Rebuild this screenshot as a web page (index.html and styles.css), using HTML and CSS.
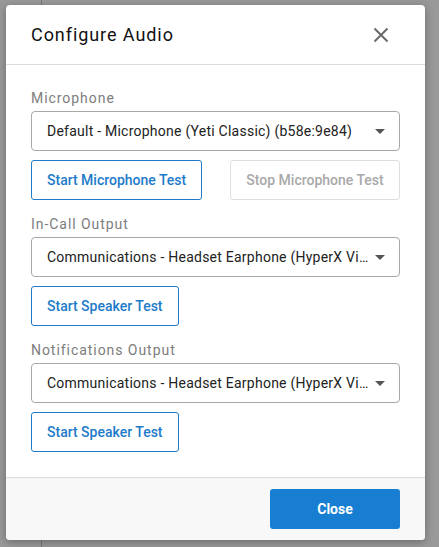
FILE: index.html
```html
<!DOCTYPE html>
<html>
<head>
<meta charset="utf-8">
<link rel="stylesheet" href="styles.css">
</head>
<body>
<div class="page">
  <div class="page-line"></div>
</div>
<div class="backdrop">
  <div class="dialog">
    <div class="dialog-header">
      <h1 class="dialog-title">Configure Audio</h1>
      <button class="icon-btn" aria-label="Close">
        <svg width="16" height="16" viewBox="0 0 16 16"><path d="M1.5 1.5 L14.5 14.5 M14.5 1.5 L1.5 14.5" stroke="#6b6b6b" stroke-width="2" fill="none"/></svg>
      </button>
    </div>
    <div class="dialog-body">
      <div class="section">
        <div class="field-label">Microphone</div>
        <div class="select"><span class="select-text">Default - Microphone (Yeti Classic) (b58e:9e84)</span><span class="caret"></span></div>
        <div class="btn-row">
          <button class="btn btn-outline">Start Microphone Test</button>
          <button class="btn btn-disabled">Stop Microphone Test</button>
        </div>
      </div>
      <div class="section">
        <div class="field-label">In-Call Output</div>
        <div class="select"><span class="select-text">Communications - Headset Earphone (HyperX Virtual Surround Sound)</span><span class="caret"></span></div>
        <div class="btn-row">
          <button class="btn btn-outline">Start Speaker Test</button>
        </div>
      </div>
      <div class="section">
        <div class="field-label">Notifications Output</div>
        <div class="select"><span class="select-text">Communications - Headset Earphone (HyperX Virtual Surround Sound)</span><span class="caret"></span></div>
        <div class="btn-row">
          <button class="btn btn-outline">Start Speaker Test</button>
        </div>
      </div>
    </div>
    <div class="dialog-footer">
      <button class="btn btn-primary">Close</button>
    </div>
  </div>
</div>
</body>
</html>
```
FILE: styles.css
```css
* { box-sizing: border-box; }
html, body { margin: 0; padding: 0; }
body {
  width: 439px;
  height: 547px;
  overflow: hidden;
  font-family: Roboto, "Liberation Sans", sans-serif;
  background: #fff;
  position: relative;
}
.page { position: absolute; inset: 0; background: #fff; }
.page-line { position: absolute; left: 41px; top: 0; bottom: 0; width: 1px; background: #c8c8c8; }
.backdrop {
  position: absolute;
  inset: 0;
  background: rgba(0,0,0,0.4);
  padding: 5px 14px 0 6px;
}
.dialog {
  width: 419px;
  height: 535px;
  background: #fff;
  border-radius: 4px;
  box-shadow: 0 2px 8px rgba(0,0,0,0.3);
  display: flex;
  flex-direction: column;
  overflow: hidden;
}
.dialog-header {
  height: 60px;
  border-bottom: 1px solid #dcdcdc;
  display: flex;
  align-items: center;
  justify-content: space-between;
  padding: 0 36px 0 25px;
  flex-shrink: 0;
}
.dialog-title {
  margin: 0;
  font-size: 18px;
  font-weight: 400;
  letter-spacing: 0.93px;
  color: #111;
}
.icon-btn {
  border: 0;
  background: none;
  padding: 0;
  width: 16px;
  height: 16px;
  display: flex;
}
.dialog-body {
  flex: 1;
  padding: 23px 25px 0 25px;
  display: flex;
  flex-direction: column;
  gap: 14px;
}
.section { display: flex; flex-direction: column; }
.field-label {
  font-size: 14px;
  line-height: 20px;
  color: #7d7d7d;
  letter-spacing: 0.95px;
  margin-bottom: 3px;
}
.select {
  height: 40px;
  border: 1px solid #a8a8a8;
  border-radius: 4px;
  display: flex;
  align-items: center;
  padding: 0 14px 0 15px;
}
.select-text {
  display: block;
  flex: 1;
  min-width: 0;
  font-size: 14px;
  letter-spacing: 0.24px;
  color: #222;
  white-space: nowrap;
  overflow: hidden;
  text-overflow: ellipsis;
}
.caret {
  width: 0;
  height: 0;
  border-left: 5px solid transparent;
  border-right: 5px solid transparent;
  border-top: 5px solid #555;
  flex-shrink: 0;
  margin-left: 3px;
}
.btn-row {
  display: flex;
  justify-content: space-between;
  margin-top: 9px;
}
.btn {
  height: 40px;
  border-radius: 3px;
  font-family: Roboto, "Liberation Sans", sans-serif;
  font-size: 14px;
  font-weight: 500;
  padding: 0 15px;
  background: #fff;
  cursor: pointer;
}
.btn-outline {
  border: 1px solid #1e7bc9;
  color: #1e7bc9;
}
.btn-disabled {
  border: 1px solid #dedede;
  color: #a9a9a9;
  width: 170px;
}
.dialog-footer {
  height: 63px;
  border-top: 1px solid #dcdcdc;
  background: #f8f8f8;
  display: flex;
  align-items: center;
  justify-content: flex-end;
  padding: 0 25px;
  flex-shrink: 0;
}
.btn-primary {
  width: 130px;
  border: 0;
  background: #177ed2;
  color: #fff;
  font-weight: 700;
  font-size: 14px;
}
```
